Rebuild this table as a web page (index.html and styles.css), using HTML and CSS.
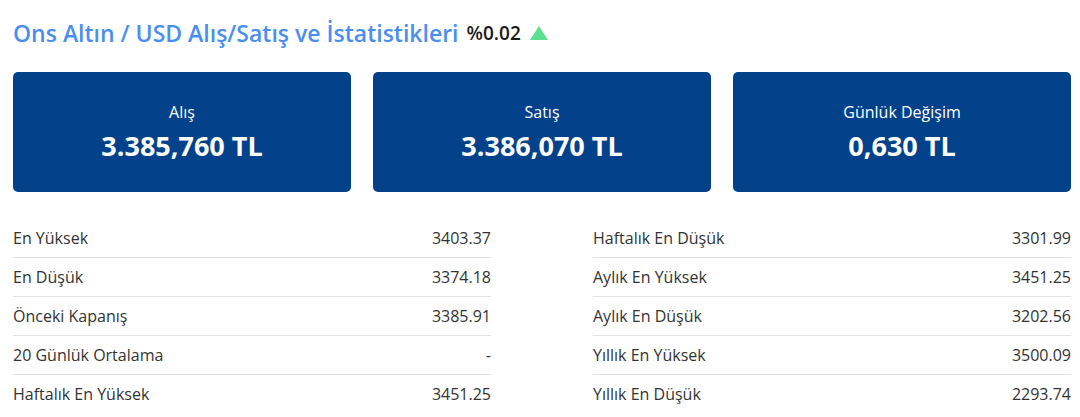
FILE: index.html
```html
<!DOCTYPE html>
<html lang="tr">
<head>
<meta charset="utf-8">
<link rel="stylesheet" href="styles.css">
</head>
<body>
<div class="page">
  <h1 class="title">Ons Altın / USD Alış/Satış ve İstatistikleri<span class="pct">%0.02</span><span class="tri"></span></h1>
  <div class="cards">
    <div class="card"><div class="label">Alış</div><div class="value">3.385,760 TL</div></div>
    <div class="card"><div class="label">Satış</div><div class="value">3.386,070 TL</div></div>
    <div class="card"><div class="label">Günlük Değişim</div><div class="value">0,630 TL</div></div>
  </div>
  <div class="stats">
    <div class="col">
      <div class="row"><span>En Yüksek</span><span>3403.37</span></div>
      <div class="row"><span>En Düşük</span><span>3374.18</span></div>
      <div class="row"><span>Önceki Kapanış</span><span>3385.91</span></div>
      <div class="row"><span>20 Günlük Ortalama</span><span>-</span></div>
      <div class="row"><span>Haftalık En Yüksek</span><span>3451.25</span></div>
    </div>
    <div class="col">
      <div class="row"><span>Haftalık En Düşük</span><span>3301.99</span></div>
      <div class="row"><span>Aylık En Yüksek</span><span>3451.25</span></div>
      <div class="row"><span>Aylık En Düşük</span><span>3202.56</span></div>
      <div class="row"><span>Yıllık En Yüksek</span><span>3500.09</span></div>
      <div class="row"><span>Yıllık En Düşük</span><span>2293.74</span></div>
    </div>
  </div>
</div>
</body>
</html>
```
FILE: styles.css
```css
html, body { margin: 0; padding: 0; background: #fff; }
body { font-family: "Open Sans", "Liberation Sans", sans-serif; }
.page { padding: 18px 9px 0 13px; }
.title {
  margin: 0;
  font-size: 23px;
  font-weight: 600;
  color: #4a8ff0;
  line-height: 30px;
  display: flex;
  align-items: center;
  white-space: nowrap;
}
.pct { color: #1a1a1a; font-size: 19px; font-weight: 600; margin-left: 8px; }
.tri {
  display: inline-block;
  width: 0; height: 0;
  margin-left: 9px;
  border-left: 9px solid transparent;
  border-right: 9px solid transparent;
  border-bottom: 14px solid #5ddf90;
}
.cards {
  margin-top: 24px;
  display: grid;
  grid-template-columns: repeat(3, 1fr);
  gap: 22px;
}
.card {
  background: #03428a;
  border-radius: 5px;
  height: 120px;
  color: #fff;
  display: flex;
  flex-direction: column;
  align-items: center;
  justify-content: center;
}
.label { font-size: 16px; line-height: 24px; }
.value { font-size: 27px; font-weight: 700; line-height: 36px; margin-top: 4px; }
.stats {
  margin-top: 27px;
  display: grid;
  grid-template-columns: 478px 478px;
  justify-content: space-between;
}
.row {
  display: flex;
  justify-content: space-between;
  align-items: center;
  height: 38px;
  font-size: 16px;
  color: #333;
  border-bottom: 1px solid #e3e3e3;
}
.row:last-child { border-bottom: none; }
```
